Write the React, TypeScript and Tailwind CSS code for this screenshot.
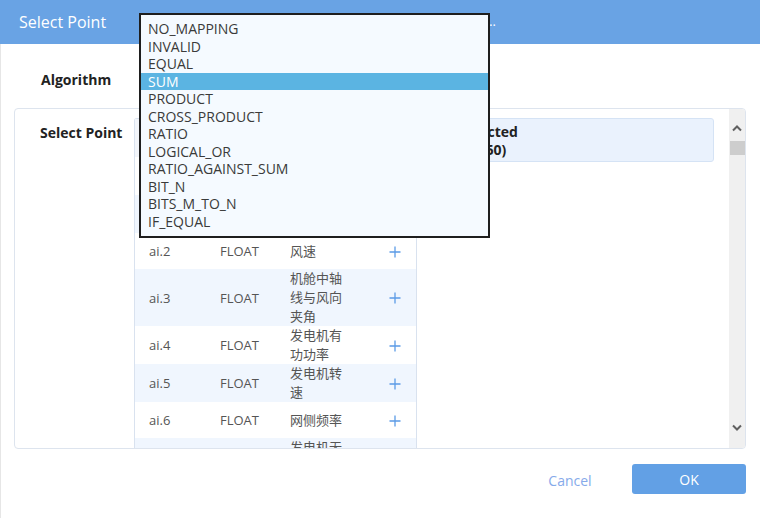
import React from 'react'

const algorithms = [
  'NO_MAPPING',
  'INVALID',
  'EQUAL',
  'SUM',
  'PRODUCT',
  'CROSS_PRODUCT',
  'RATIO',
  'LOGICAL_OR',
  'RATIO_AGAINST_SUM',
  'BIT_N',
  'BITS_M_TO_N',
  'IF_EQUAL',
]

const points = [
  { id: 'ai.0', type: 'FLOAT', name: '机组运行状态' },
  { id: 'ai.1', type: 'FLOAT', name: '叶轮转速值' },
  { id: 'ai.2', type: 'FLOAT', name: '风速' },
  { id: 'ai.3', type: 'FLOAT', name: '机舱中轴线与风向夹角' },
  { id: 'ai.4', type: 'FLOAT', name: '发电机有功功率' },
  { id: 'ai.5', type: 'FLOAT', name: '发电机转速' },
  { id: 'ai.6', type: 'FLOAT', name: '网侧频率' },
  { id: 'ai.7', type: 'FLOAT', name: '发电机无功功率' },
  { id: 'ai.8', type: 'FLOAT', name: '发电机定子温度' },
]

function Plus() {
  return (
    <svg width="12" height="12" viewBox="0 0 12 12" fill="none">
      <path d="M6 0.5V11.5M0.5 6H11.5" stroke="#5b9be6" strokeWidth="1.3" />
    </svg>
  )
}

function Chevron({ down }: { down?: boolean }) {
  return (
    <svg width="10" height="7" viewBox="0 0 10 7" fill="none">
      <path
        d={down ? 'M1 1.5L5 5.5L9 1.5' : 'M1 5.5L5 1.5L9 5.5'}
        stroke="#606060"
        strokeWidth="2"
      />
    </svg>
  )
}

export default function App() {
  return (
    <div
      className="relative w-[760px] h-[518px] overflow-hidden bg-white shadow-[inset_1px_0_0_#e6e6e6] flex flex-col"
      style={{ fontFamily: '"Open Sans", "Noto Sans CJK SC", sans-serif' }}
    >
      <div className="h-[44px] flex-none bg-[#69a3e4] flex items-center pl-[19px] text-white">
        <span className="text-[16px] w-[121px]">Select Point</span>
        <span className="w-[356px] truncate text-[13px]">
          Choose the source point for the mapping algorithm of this channel and then confirm
        </span>
      </div>

      <div className="mt-[20px] h-[30px] flex items-center pl-[41px] pt-[1px]">
        <span className="w-[98px] text-[14px] font-bold text-[#222]">Algorithm</span>
        <div className="w-[350px] h-[30px] border border-[#d9e2ef] rounded-[3px]" />
      </div>

      <div className="mt-[14px] mx-[14px] h-[341px] flex-none border border-[#dde4ee] rounded-[4px] flex overflow-hidden">
        <div className="w-[119px] flex-none pt-[14px] pl-[25px] text-[14px] font-bold text-[#222] leading-[19px]">
          Select Point
        </div>

        <div className="w-[283px] flex-none pt-[9px]">
          <div className="border-x border-t border-[#d9e2ef] rounded-t-[3px] text-[13px] text-[#555] leading-[19px]">
            <div className="grid grid-cols-[71px_70px_86px_1fr] h-[38px] items-center bg-[#f2f5fa] text-[#333] font-bold">
              <span className="pl-[14px]">ID</span>
              <span className="pl-[14px]">Type</span>
              <span className="pl-[14px]">Name</span>
              <span />
            </div>
            {points.map((p, i) => (
              <div
                key={p.id}
                className={`grid grid-cols-[71px_70px_86px_1fr] min-h-[36px] items-center ${
                  i % 2 === 1 ? 'bg-[#f0f6fe]' : 'bg-white'
                }`}
              >
                <span className="pl-[14px] pt-[1px]">{p.id}</span>
                <span className="pl-[14px] pt-[1px]">{p.type}</span>
                <span className="pl-[14px] pr-[14px] break-all">{p.name}</span>
                <span className="pl-[27px] flex items-center pt-[1px]">
                  <Plus />
                </span>
              </div>
            ))}
          </div>
        </div>

        <div className="w-[286px] flex-none ml-[11px] pt-[9px]">
          <div className="h-[44px] border border-[#d5e3f5] bg-[#eaf2fd] rounded-[3px] pl-[30px] pt-[4px] text-[14px] font-bold text-[#222] leading-[18px]">
            <div>Selected</div>
            <div>(0/160)</div>
          </div>
        </div>

        <div className="w-[16px] flex-none ml-[15px] bg-[#f0f0f0] flex flex-col items-center">
          <div className="h-[32px] flex-none flex items-start justify-center pt-[16px]">
            <Chevron />
          </div>
          <div className="w-[15px] h-[14px] bg-[#cdcdcd]" />
          <div className="flex-1" />
          <div className="h-[32px] flex-none flex items-start justify-center pt-[8px]">
            <Chevron down />
          </div>
        </div>
      </div>

      <div className="mt-[15px] pr-[14px] flex justify-end gap-[5px]">
        <button className="w-[114px] h-[30px] text-[14px] text-[#86aaea] pt-[2px]">Cancel</button>
        <button className="w-[114px] h-[30px] rounded-[3px] bg-[#62a0e5] text-[14px] text-white">OK</button>
      </div>

      <div className="absolute left-[139px] top-[13px] w-[351px] h-[225px] border-2 border-[#1e1e1e] bg-[#f5faff] pt-[5px]">
        {algorithms.map((a) => (
          <div
            key={a}
            className={`h-[17.55px] leading-[17.55px] pl-[7px] text-[14px] ${
              a === 'SUM' ? 'bg-[#5bb4e2] text-white' : 'text-[#3a3a3a]'
            }`}
          >
            {a}
          </div>
        ))}
      </div>
    </div>
  )
}
